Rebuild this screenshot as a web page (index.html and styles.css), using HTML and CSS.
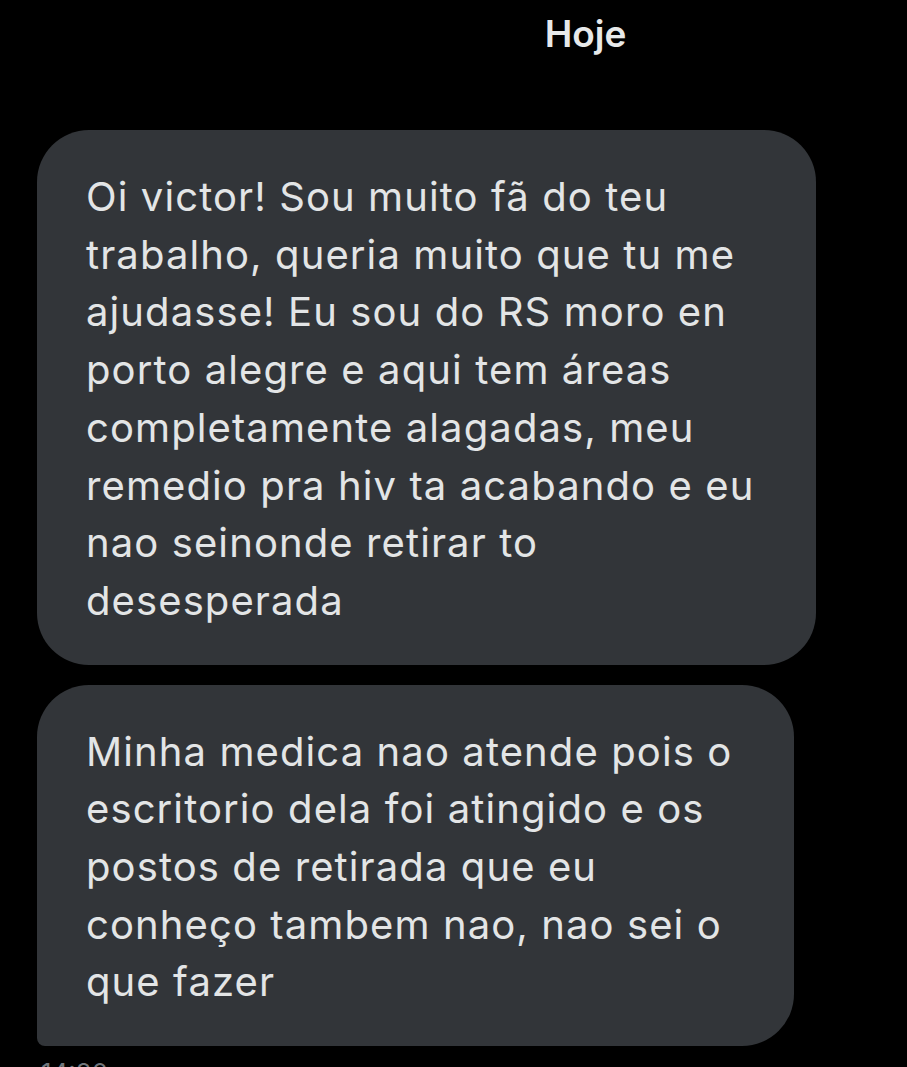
FILE: index.html
```html
<!DOCTYPE html>
<html lang="pt-BR">
<head>
    <meta charset="UTF-8">
    <meta name="viewport" content="width=device-width, initial-scale=1.0">
    <title>Mensagens</title>
    <link rel="stylesheet" href="styles.css">
</head>
<body>
    <div class="day">Hoje</div>

    <div class="thread">
        <div class="bubble">
            Oi victor! Sou muito fã do teu<br>
            trabalho, queria muito que tu me<br>
            ajudasse! Eu sou do RS moro en<br>
            porto alegre e aqui tem áreas<br>
            completamente alagadas, meu<br>
            remedio pra hiv ta acabando e eu<br>
            nao seinonde retirar to<br>
            desesperada
        </div>
        <div class="bubble last">
            Minha medica nao atende pois o<br>
            escritorio dela foi atingido e os<br>
            postos de retirada que eu<br>
            conheço tambem nao, nao sei o<br>
            que fazer
        </div>
        <div class="time">14:20</div>
    </div>
</body>
</html>
```

FILE: styles.css
```css
body {
    font-family: 'Inter', 'Roboto', sans-serif;
    background-color: #000;
    margin: 0;
    padding: 0;
    overflow: hidden;
}
.day {
    color: #e7e9ea;
    font-size: 37px;
    font-weight: 600;
    line-height: 40px;
    text-align: center;
    padding: 14px 0 0 264px;
}
.thread {
    display: flex;
    flex-direction: column;
    align-items: flex-start;
    gap: 20px;
    padding: 76px 0 0 37px;
}
.bubble {
    width: fit-content;
    white-space: nowrap;
    background-color: #323539;
    color: #e3e5e6;
    font-size: 40px;
    letter-spacing: 1.1px;
    line-height: 57.7px;
    padding: 38px 62px 35px 49px;
    border-radius: 52px;
}
.bubble.last {
    border-bottom-left-radius: 8px;
}
.time {
    color: #71767b;
    font-size: 26px;
    margin-top: -9px;
    padding-left: 4px;
}
```
